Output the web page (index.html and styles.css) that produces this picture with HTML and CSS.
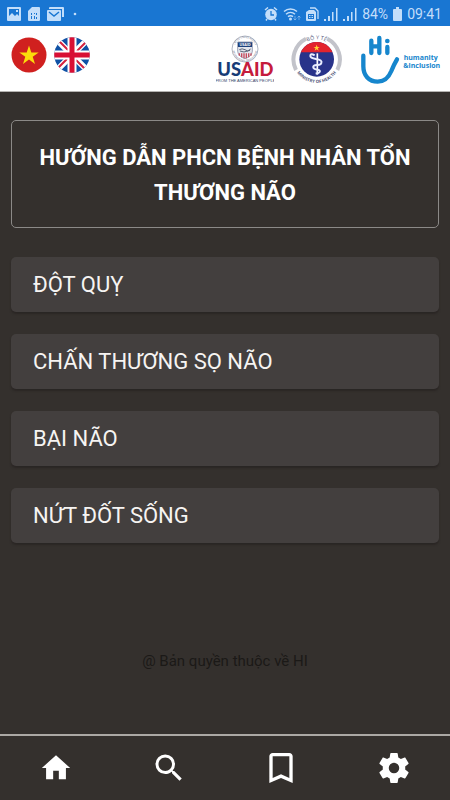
FILE: index.html
```html
<!DOCTYPE html>
<html lang="vi">
<head>
<meta charset="utf-8">
<meta name="viewport" content="width=device-width, initial-scale=1">
<title>Hướng dẫn PHCN</title>
<link rel="stylesheet" href="styles.css">
</head>
<body>
<div class="app">
  <div class="status">
    <div class="status-group notices">
      <svg width="14" height="14" viewBox="0 0 14 14"><path fill="currentColor" fill-rule="evenodd" d="M1 0h12a1 1 0 0 1 1 1v12a1 1 0 0 1-1 1H1a1 1 0 0 1-1-1V1a1 1 0 0 1 1-1zm1 2v7l3-3 3 3 2-2 2 2V2zm7 1h2v2H9z"/></svg>
      <svg width="12" height="14" viewBox="0 0 12 14"><path fill="currentColor" fill-rule="evenodd" d="M4 0h7a1 1 0 0 1 1 1v12a1 1 0 0 1-1 1H1a1 1 0 0 1-1-1V4zM3 6v2h1V6zm3 0v1h1V6zm2 0v2h1V6zM3 9v3h1V9zm3 0v3h1V9zm2 1v2h1v-2z"/></svg>
      <svg width="17" height="14" viewBox="0 0 17 14"><path fill="currentColor" d="M3 0h13a1 1 0 0 1 1 1v9h-2V2H2V1a1 1 0 0 1 1-1z"/><rect y="3" width="14" height="11" rx="1" fill="currentColor"/><path d="M2 5l5 4 5-4" fill="none" stroke="#1976d2" stroke-width="1.5"/></svg>
      <svg class="more" width="4" height="4" viewBox="0 0 4 4"><circle cx="2" cy="2" r="1.3" fill="currentColor"/></svg>
    </div>
    <div class="status-group">
      <svg width="14" height="14" viewBox="0 0 14 14"><circle cx="7" cy="7.5" r="5.8" fill="currentColor"/><path d="M1 3l3-2.5M13 3l-3-2.5M3 12l-1 1.5M11 12l1 1.5" stroke="currentColor" stroke-width="1.5"/><path d="M7 4v4h3" fill="none" stroke="#1976d2" stroke-width="1.3"/></svg>
      <svg width="18" height="14" viewBox="0 0 18 14"><g fill="none" stroke="currentColor" stroke-width="1.5"><path d="M1 4.500a10 10 0 0 1 13 0M3 7.200a7 7 0 0 1 9 0M5 9.700a4 4 0 0 1 5 0"/></g><circle cx="7.500" cy="12" r="1.500" fill="currentColor"/><path d="M12 9v4M10.500 11.500L12 13l1.500-1.500M16 13V9M14.500 10.500L16 9l1.500 1.500" fill="none" stroke="currentColor" stroke-width=".8" opacity=".6"/></svg>
      <svg width="13" height="14" viewBox="0 0 13 14"><path d="M4 1h5l3 3v8" fill="none" stroke="currentColor" stroke-width="1.300"/><path fill="currentColor" fill-rule="evenodd" d="M3 3h5l2 2v8a1 1 0 0 1-1 1H1a1 1 0 0 1-1-1V5zM2 7v5h6V7zm1 1h1.500v1H3zm2.500 0H7v1H5.500zM3 10h1.500v1H3zm2.500 0H7v1H5.500z"/></svg>
      <svg width="14" height="14" viewBox="0 0 14 14"><path fill="currentColor" d="M0 12h2v2H0zM4 9h2v5H4zM8 5h1.500v9H8zM12 1h1.500v13H12z"/></svg>
      <svg width="14" height="14" viewBox="0 0 14 14"><path fill="currentColor" d="M0 12h2v2H0zM4 9h2v5H4zM8 5h1.500v9H8zM12 1h1.500v13H12z"/></svg>
      <span>84%</span>
      <svg width="9" height="14" viewBox="0 0 9 14"><path fill="currentColor" d="M3 0h3v2h2a1 1 0 0 1 1 1v10a1 1 0 0 1-1 1H1a1 1 0 0 1-1-1V3a1 1 0 0 1 1-1h2z"/></svg>
      <span>09:41</span>
    </div>
  </div>

  <header class="header">
    <div class="languages">
      <button class="flag" type="button" aria-label="Tiếng Việt">
        <svg width="36" height="36" viewBox="0 0 36 36"><circle cx="18" cy="18" r="17.500" fill="#d0201f"/><path fill="#fbdc0b" d="M18 8.500l2.300 7h7.400l-6 4.300 2.300 7.100-6-4.400-6 4.400 2.300-7.100-6-4.300h7.400z"/></svg>
      </button>
      <button class="flag" type="button" aria-label="English">
        <svg width="36" height="36" viewBox="0 0 36 36"><defs><clipPath id="disc"><circle cx="18" cy="18" r="17.800"/></clipPath></defs><g clip-path="url(#disc)"><path fill="#0f51a5" d="M0 0h36v36H0z"/><path d="M2 2l32 32M34 2L2 34" stroke="#fff" stroke-width="6"/><path d="M4 3l11 11M33 4L22 15M32 33L21 22M3 32l11-11" stroke="#d4213f" stroke-width="2"/><path d="M18 0v36M0 18h36" stroke="#fff" stroke-width="9"/><path d="M18 0v36M0 18h36" stroke="#d80f34" stroke-width="5"/></g></svg>
      </button>
    </div>
    <div class="brands">
      <svg width="58" height="52" viewBox="0 0 174 156" role="img" aria-label="USAID">
        <defs><path id="sealTop" d="M54 48a33 33 0 0 1 66 0"/><path id="sealBottom" d="M50 48a37 37 0 0 0 74 0"/></defs>
        <circle cx="87" cy="48" r="39" fill="#fff" stroke="#8790a3" stroke-width="2"/>
        <g class="seal-text" fill="#53617d"><text><textPath href="#sealTop" startOffset="50%">UNITED STATES AGENCY</textPath></text><text><textPath href="#sealBottom" startOffset="50%">INTERNATIONAL DEVELOPMENT</textPath></text></g>
        <path fill="#e3e6ed" stroke="#6c7896" stroke-width="2" d="M65 27h44v28q-2 16-22 22-20-6-22-22z"/>
        <path fill="#1c407c" d="M66 28h42v14H66z"/><text class="seal-name" x="87" y="39" fill="#fff">USAID</text>
        <path d="M70 50q8-5 17 0l8 4 9-6M72 54l12 3 18-5" fill="none" stroke="#5c6679" stroke-width="3"/>
        <path d="M70 61v7M77 61v12M84 61v15M91 61v15M98 61v12M105 61v7" stroke="#c74b5c" stroke-width="4"/>
        <text class="usaid" x="88" y="130"><tspan fill="#173c77">US</tspan><tspan fill="#c51c3c">AID</tspan></text>
        <text class="usaid-tag" x="88" y="148" fill="#334469">FROM THE AMERICAN PEOPLE</text>
      </svg>
      <svg width="52" height="52" viewBox="0 0 156 156" role="img" aria-label="Bộ Y Tế - Ministry of Health">
        <defs><path id="mohTop" d="M17 79a60 60 0 0 1 120 0"/><path id="mohBottom" d="M6 79a71 71 0 0 0 142 0"/><clipPath id="moh"><circle cx="77" cy="79" r="52"/></clipPath></defs>
        <path d="M45 17a70 70 0 0 0-30 94M109 17a70 70 0 0 1 30 94" fill="none" stroke="#c2c3ca" stroke-width="12"/>
        <g clip-path="url(#moh)"><path fill="#29338a" d="M20 20h120v120H20z"/><path fill="#e3242e" d="M20 20h120v38H20z"/></g>
        <path fill="#ffd332" d="M77 35l2.500 7h7l-6 4 2.500 7-6-4-6 4 2.500-7-6-4h7z"/>
        <path d="M79 61v64" stroke="#fff" stroke-width="5"/>
        <path d="M71 67q-13-8-13 2 0 6 17 9 20 3 16 12-2 7-14 6-12 0-10 8 2 5 13 6 10 2 5 8-4 4-11 3" fill="none" stroke="#e9edff" stroke-width="6"/>
        <g fill="#53587a"><text class="moh-top"><textPath href="#mohTop" startOffset="50%">BỘ Y TẾ</textPath></text><text class="moh-bottom"><textPath href="#mohBottom" startOffset="50%">MINISTRY OF HEALTH</textPath></text></g>
      </svg>
      <svg width="82" height="52" viewBox="30 15 246 156" role="img" aria-label="Humanity &amp; Inclusion">
        <g fill="none" stroke="#1686cd" stroke-width="13" stroke-linecap="round" stroke-linejoin="round"><path d="M40 83v32c0 28 17 46 43 46 23 0 33-13 41-32q7-18 17-35"/><path d="M64 38v37M88 30v45M64 55h24M112 57v18"/></g><circle cx="112" cy="39" r="7" fill="#1686cd"/>
        <g class="hi-name" fill="#1686cd"><text x="161" y="97">humanity</text><text x="160" y="119">&amp;inclusion</text></g>
      </svg>
    </div>
  </header>

  <main class="main">
    <h1 class="title">HƯỚNG DẪN PHCN BỆNH NHÂN TỔN THƯƠNG NÃO</h1>
    <div class="topics">
      <button class="topic" type="button">ĐỘT QUỴ</button>
      <button class="topic" type="button">CHẤN THƯƠNG SỌ NÃO</button>
      <button class="topic" type="button">BẠI NÃO</button>
      <button class="topic" type="button">NỨT ĐỐT SỐNG</button>
    </div>
    <p class="copyright">@ Bản quyền thuộc về HI</p>
  </main>

  <nav class="nav">
    <a href="#home" aria-label="Trang chủ"><svg width="34" height="34" viewBox="0 0 24 24"><path fill="currentColor" d="M10 20v-6h4v6h5v-8h3L12 3 2 12h3v8z"/></svg></a>
    <a href="#search" aria-label="Tìm kiếm"><svg width="36" height="36" viewBox="0 0 24 24"><path fill="currentColor" d="M15.500 14h-.79l-.28-.27A6.471 6.471 0 0 0 16 9.500 6.500 6.500 0 1 0 9.500 16c1.610 0 3.090-.59 4.230-1.570l.27.280v.79l5 4.990L20.490 19l-4.990-5zm-6 0C7.010 14 5 11.990 5 9.500S7.010 5 9.500 5 14 7.010 14 9.500 11.990 14 9.500 14z"/></svg></a>
    <a href="#bookmarks" aria-label="Đánh dấu"><svg width="40" height="40" viewBox="0 0 24 24"><path fill="currentColor" d="M17 3H7c-1.100 0-2 .9-2 2v16l7-3 7 3V5c0-1.100-.9-2-2-2zm0 15l-5-2.180L7 18V5h10v13z"/></svg></a>
    <a href="#settings" aria-label="Cài đặt"><svg width="36" height="36" viewBox="0 0 24 24"><path fill="currentColor" d="M19.430 12.980c.04-.32.070-.64.070-.98s-.03-.66-.07-.98l2.110-1.650c.19-.15.240-.42.120-.64l-2-3.460c-.12-.22-.39-.3-.61-.22l-2.490 1c-.52-.4-1.080-.73-1.690-.98l-.38-2.650A.488.488 0 0 0 14 2h-4c-.25 0-.46.180-.49.420l-.38 2.650c-.61.250-1.170.590-1.690.980l-2.490-1c-.23-.09-.49 0-.61.220l-2 3.460c-.13.220-.07.490.12.640l2.110 1.650c-.04.320-.07.650-.07.980s.03.660.07.980l-2.110 1.650c-.19.150-.24.420-.12.640l2 3.460c.12.220.39.300.61.220l2.490-1c.52.400 1.080.730 1.690.980l.38 2.650c.03.240.24.420.49.420h4c.25 0 .46-.18.490-.42l.38-2.650c.61-.25 1.170-.59 1.690-.98l2.490 1c.23.090.49 0 .61-.22l2-3.460c.12-.22.070-.49-.12-.64l-2.110-1.650zM12 15.500A3.500 3.500 0 1 1 12 8.500a3.500 3.500 0 0 1 0 7z"/></svg></a>
  </nav>
</div>
</body>
</html>
```
FILE: styles.css
```css
* { box-sizing: border-box; }

body {
  margin: 0;
  background: #34302d;
  color: #fff;
  font-family: Roboto, "Liberation Sans", sans-serif;
}

svg { display: block; flex: none; }

button {
  border: 0;
  font: inherit;
  color: inherit;
  cursor: pointer;
}

.app {
  display: flex;
  flex-direction: column;
  min-height: 100vh;
}

.status {
  display: flex;
  justify-content: space-between;
  align-items: center;
  height: 26px;
  padding: 1px 8px 0 7px;
  background: #1976d2;
  color: #c3defa;
  font-size: 14px;
}

.status-group {
  display: flex;
  align-items: center;
  gap: 5px;
}

.notices { gap: 7px; }
.more { margin-left: 2px; }

.header {
  display: flex;
  justify-content: space-between;
  align-items: flex-start;
  padding: 7px 8px 6px 11px;
  background: #fff;
  border-bottom: 1px solid #b5b3b1;
}

.languages {
  display: flex;
  gap: 7px;
  padding-top: 4px;
}

.flag {
  padding: 0;
  background: none;
  border-radius: 50%;
}

.brands {
  display: flex;
  gap: 17px;
}

.seal-text,
.seal-name,
.moh-top,
.moh-bottom,
.hi-name { font-family: "Open Sans", sans-serif; }

.seal-text { font-size: 7px; text-anchor: middle; }
.seal-name { font-size: 11px; font-weight: 700; text-anchor: middle; }
.usaid { font-family: Lato, sans-serif; font-size: 55px; font-weight: 900; text-anchor: middle; }
.usaid-tag { font-family: "Liberation Sans", sans-serif; font-size: 12px; text-anchor: middle; }
.moh-top { font-size: 16px; text-anchor: middle; }
.moh-bottom { font-size: 13px; font-weight: 700; text-anchor: middle; }
.hi-name { font-size: 21px; font-weight: 700; }

.main {
  flex: 1;
  display: flex;
  flex-direction: column;
  padding: 28px 11px;
}

.title {
  margin: 0 0 29px;
  padding: 19px 18px 17px;
  border: 1px solid #8b8987;
  border-radius: 5px;
  font-size: 22px;
  line-height: 35px;
  font-weight: 700;
  text-align: center;
}

.topics {
  display: grid;
  gap: 22px;
}

.topic {
  padding: 10px 22px;
  border-radius: 5px;
  background: #433f3e;
  box-shadow: 0 2px 2px #2a2624;
  color: #f6f4f2;
  font-size: 22px;
  line-height: 35px;
  text-align: left;
}

.copyright {
  margin: 108px 0 0;
  color: #1b1917;
  font-size: 15px;
  line-height: 20px;
  text-align: center;
}

.nav {
  display: grid;
  grid-template-columns: repeat(4, 1fr);
  height: 66px;
  border-top: 2px solid #aba8a4;
}

.nav a {
  display: flex;
  align-items: center;
  justify-content: center;
  color: #fff;
}
```
